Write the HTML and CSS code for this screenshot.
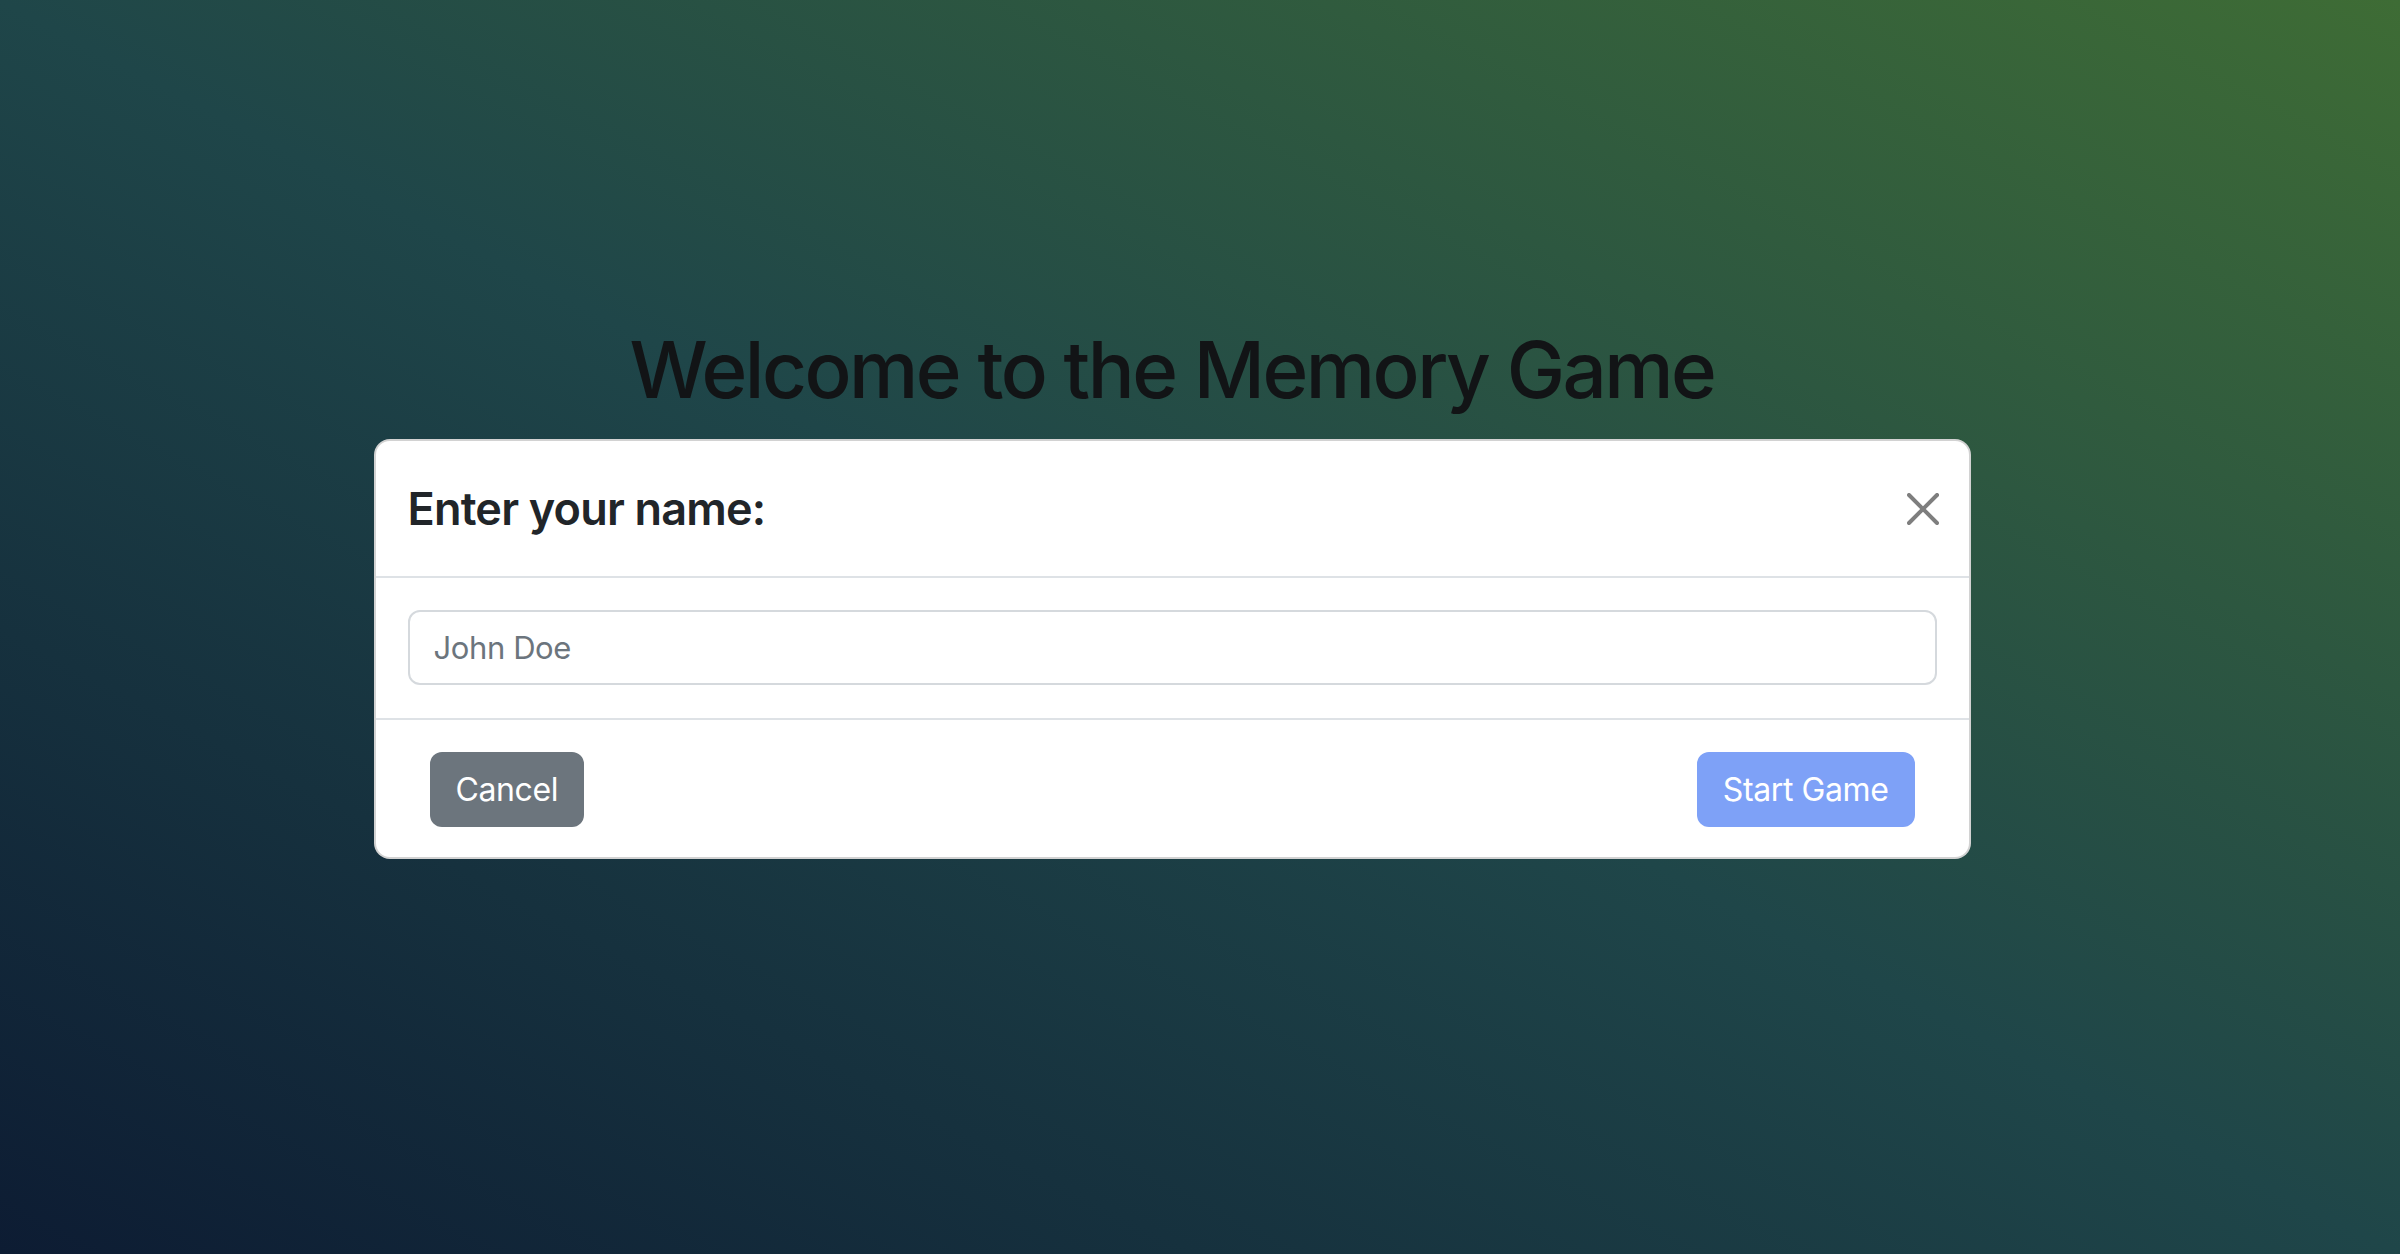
FILE: index.html
```html
<!DOCTYPE html>
<html lang="en">
<head>
<meta charset="utf-8">
<title>Memory Game</title>
<link rel="stylesheet" href="styles.css">
</head>
<body>
<div class="page">
  <h1 class="welcome">Welcome to the Memory Game</h1>
  <div class="modal">
    <div class="modal-header">
      <h4 class="modal-title">Enter your name:</h4>
      <button class="btn-close" type="button" aria-label="Close">
        <svg viewBox="0 0 16 16" width="32" height="32" aria-hidden="true"><path d="M.293.293a1 1 0 0 1 1.414 0L8 6.586 14.293.293a1 1 0 1 1 1.414 1.414L9.414 8l6.293 6.293a1 1 0 0 1-1.414 1.414L8 9.414l-6.293 6.293a1 1 0 0 1-1.414-1.414L6.586 8 .293 1.707a1 1 0 0 1 0-1.414z"/></svg>
      </button>
    </div>
    <div class="modal-body">
      <input class="form-control" type="text" placeholder="John Doe">
    </div>
    <div class="modal-footer">
      <button class="btn btn-secondary" type="button">Cancel</button>
      <button class="btn btn-primary" type="button" disabled>Start Game</button>
    </div>
  </div>
</div>
</body>
</html>
```
FILE: styles.css
```css
* { box-sizing: border-box; }
html, body { margin: 0; height: 100%; }
body {
  font-family: Inter, "Liberation Sans", Arial, sans-serif;
  background: linear-gradient(to top right, #0d1c33 0%, #1f4649 50%, #3e6c35 100%);
  background-attachment: fixed;
  overflow: hidden;
}
.page {
  min-height: 100vh;
  padding: 322px 56px 0 0;
  display: flex;
  flex-direction: column;
  align-items: center;
}
.welcome {
  margin: 0 0 21px;
  font-size: 78px;
  line-height: 96px;
  font-weight: 500;
  color: #121416;
  letter-spacing: -2.5px;
}
.modal {
  width: 1597px;
  background: #fff;
  border: 2px solid rgba(0, 0, 0, 0.175);
  border-radius: 16px;
  display: flex;
  flex-direction: column;
}
.modal-header {
  display: flex;
  align-items: center;
  padding: 32px 30px 32px 32px;
  border-bottom: 2px solid #dee2e6;
}
.modal-title {
  flex: 1;
  margin: 0;
  font-size: 45px;
  line-height: 71px;
  font-weight: 600;
  color: #212529;
  letter-spacing: -0.8px;
}
.btn-close {
  width: 32px;
  height: 32px;
  padding: 0;
  border: 0;
  background: transparent;
  display: flex;
  align-items: center;
  justify-content: center;
}
.btn-close svg { display: block; fill: #000; opacity: 0.5; }
.modal-body {
  padding: 32px 32px 33px;
}
.form-control {
  display: block;
  width: 100%;
  height: 75px;
  padding: 0 24px;
  font-family: inherit;
  font-size: 31px;
  letter-spacing: -0.4px;
  color: #212529;
  border: 2px solid #d5d9dd;
  border-radius: 12px;
  background: #fff;
  outline: none;
}
.form-control::placeholder { color: #6c757d; opacity: 1; }
.modal-footer {
  display: flex;
  justify-content: space-between;
  align-items: center;
  padding: 32px 54px 30px;
  border-top: 2px solid #dee2e6;
}
.btn {
  height: 75px;
  padding: 0 26px;
  border: 0;
  border-radius: 12px;
  font-family: inherit;
  font-size: 32px;
  font-weight: 400;
  letter-spacing: -0.4px;
  color: #fff;
  line-height: 75px;
}
.btn-secondary { background: #6c757d; }
.btn-primary { background: #7ea1f7; }
.btn-primary:disabled { color: #fff; }
```
